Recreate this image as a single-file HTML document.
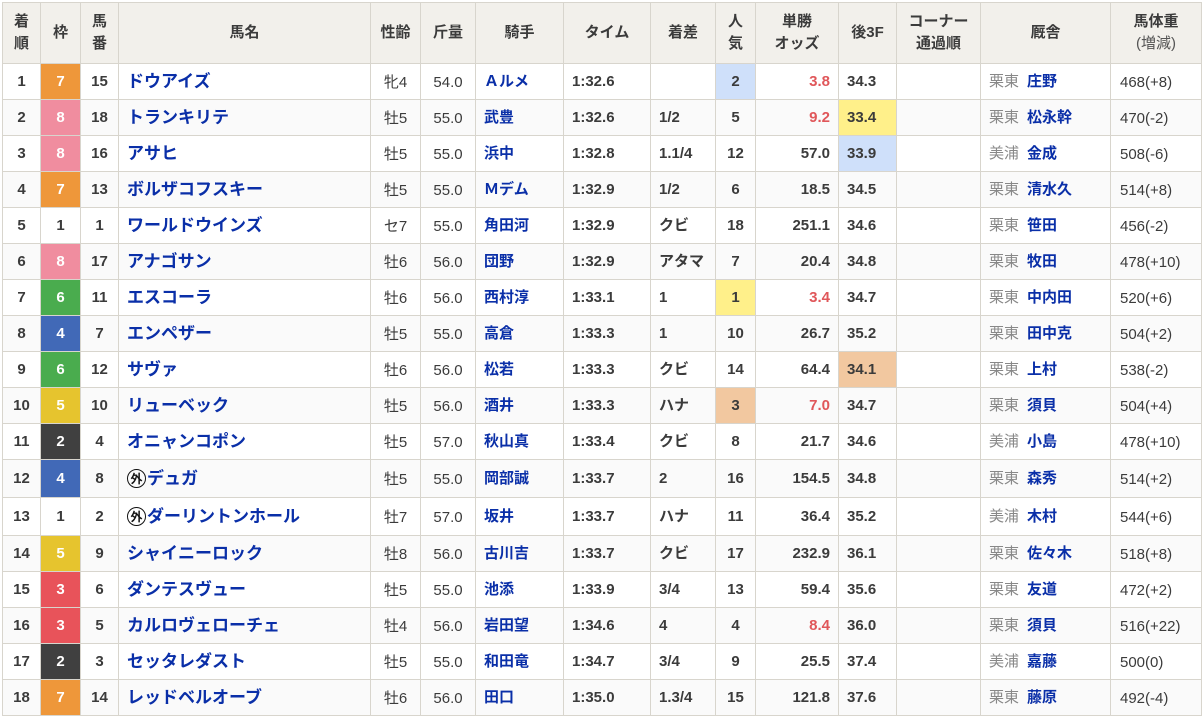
<!DOCTYPE html>
<html><head><meta charset="utf-8"><style>
body{margin:0;background:#fff;font-family:"Liberation Sans","Noto Sans CJK JP",sans-serif;color:#3b3b3b}
table{position:absolute;left:2px;top:2px;border-collapse:collapse;table-layout:fixed;width:1199px}
td,th{border:1px solid #d8d5cd;padding:0;font-size:15px;white-space:nowrap;overflow:hidden;vertical-align:middle}
th{background:#f2f0eb;font-weight:bold;height:60px;line-height:22px;color:#3b3b3b}
th small{font-weight:normal;font-size:15px;color:#555}
td{height:35px;font-weight:bold;text-align:center;line-height:20px}
tr.t td{height:37px}
tbody tr:nth-child(even) td{background:#fafafa}
td.nm{text-align:left;padding-left:8px;color:#0a2fa8;font-size:17px}
.fx{display:flex;align-items:center;height:24px}
td.n{font-weight:normal;text-align:center;font-size:15px;padding-top:3px;height:32px}
td.j{text-align:left;padding-left:8px;color:#0a2fa8}
td.l{text-align:left;padding-left:8px}
td.o{text-align:right;padding-right:8px}
td.r{color:#e0575a}
td.tr{text-align:left;padding-left:8px;color:#0a2fa8}
td.tr span{color:#888;font-weight:normal;margin-right:8px}
td.w{text-align:left;padding-left:9px;font-weight:normal;padding-top:3px;height:32px}
tr.t td.n,tr.t td.w{height:34px}
tbody tr td.f1{background:#fff!important;color:#3b3b3b}
tbody tr td.f2{background:#404040!important;color:#fff}
tbody tr td.f3{background:#e8535a!important;color:#fff}
tbody tr td.f4{background:#4169b7!important;color:#fff}
tbody tr td.f5{background:#e6c42e!important;color:#fff}
tbody tr td.f6{background:#4aac4e!important;color:#fff}
tbody tr td.f7{background:#ee973a!important;color:#fff}
tbody tr td.f8{background:#f08d9f!important;color:#fff}
tbody tr td.y{background:#fff08a!important}
tbody tr td.b{background:#cfe0fa!important}
tbody tr td.or{background:#f2c8a0!important}
.g{display:flex;align-items:center;justify-content:center;width:19px;height:19px;border:1.5px solid #111;border-radius:50%;font-size:12px;color:#111;margin-right:1px;box-sizing:border-box;line-height:12px;flex:none}
</style></head><body>
<table>
<colgroup><col style="width:38px"><col style="width:40px"><col style="width:38px"><col style="width:252px"><col style="width:50px"><col style="width:55px"><col style="width:88px"><col style="width:87px"><col style="width:65px"><col style="width:40px"><col style="width:83px"><col style="width:58px"><col style="width:84px"><col style="width:130px"><col style="width:91px"></colgroup>
<thead><tr><th>着<br>順</th><th>枠</th><th>馬<br>番</th><th>馬名</th><th>性齢</th><th>斤量</th><th>騎手</th><th>タイム</th><th>着差</th><th>人<br>気</th><th>単勝<br>オッズ</th><th>後3F</th><th>コーナー<br>通過順</th><th>厩舎</th><th>馬体重<br><small>(増減)</small></th></tr></thead>
<tbody>
<tr><td>1</td><td class="f7">7</td><td>15</td><td class="nm">ドウアイズ</td><td class="n">牝4</td><td class="n">54.0</td><td class="j">Ａルメ</td><td class="l">1:32.6</td><td class="l"></td><td class="b">2</td><td class="o r">3.8</td><td class="l">34.3</td><td></td><td class="tr"><span>栗東</span>庄野</td><td class="w">468(+8)</td></tr>
<tr><td>2</td><td class="f8">8</td><td>18</td><td class="nm">トランキリテ</td><td class="n">牡5</td><td class="n">55.0</td><td class="j">武豊</td><td class="l">1:32.6</td><td class="l">1/2</td><td>5</td><td class="o r">9.2</td><td class="l y">33.4</td><td></td><td class="tr"><span>栗東</span>松永幹</td><td class="w">470(-2)</td></tr>
<tr><td>3</td><td class="f8">8</td><td>16</td><td class="nm">アサヒ</td><td class="n">牡5</td><td class="n">55.0</td><td class="j">浜中</td><td class="l">1:32.8</td><td class="l">1.1/4</td><td>12</td><td class="o">57.0</td><td class="l b">33.9</td><td></td><td class="tr"><span>美浦</span>金成</td><td class="w">508(-6)</td></tr>
<tr><td>4</td><td class="f7">7</td><td>13</td><td class="nm">ボルザコフスキー</td><td class="n">牡5</td><td class="n">55.0</td><td class="j">Ｍデム</td><td class="l">1:32.9</td><td class="l">1/2</td><td>6</td><td class="o">18.5</td><td class="l">34.5</td><td></td><td class="tr"><span>栗東</span>清水久</td><td class="w">514(+8)</td></tr>
<tr><td>5</td><td class="f1">1</td><td>1</td><td class="nm">ワールドウインズ</td><td class="n">セ7</td><td class="n">55.0</td><td class="j">角田河</td><td class="l">1:32.9</td><td class="l">クビ</td><td>18</td><td class="o">251.1</td><td class="l">34.6</td><td></td><td class="tr"><span>栗東</span>笹田</td><td class="w">456(-2)</td></tr>
<tr><td>6</td><td class="f8">8</td><td>17</td><td class="nm">アナゴサン</td><td class="n">牡6</td><td class="n">56.0</td><td class="j">団野</td><td class="l">1:32.9</td><td class="l">アタマ</td><td>7</td><td class="o">20.4</td><td class="l">34.8</td><td></td><td class="tr"><span>栗東</span>牧田</td><td class="w">478(+10)</td></tr>
<tr><td>7</td><td class="f6">6</td><td>11</td><td class="nm">エスコーラ</td><td class="n">牡6</td><td class="n">56.0</td><td class="j">西村淳</td><td class="l">1:33.1</td><td class="l">1</td><td class="y">1</td><td class="o r">3.4</td><td class="l">34.7</td><td></td><td class="tr"><span>栗東</span>中内田</td><td class="w">520(+6)</td></tr>
<tr><td>8</td><td class="f4">4</td><td>7</td><td class="nm">エンペザー</td><td class="n">牡5</td><td class="n">55.0</td><td class="j">高倉</td><td class="l">1:33.3</td><td class="l">1</td><td>10</td><td class="o">26.7</td><td class="l">35.2</td><td></td><td class="tr"><span>栗東</span>田中克</td><td class="w">504(+2)</td></tr>
<tr><td>9</td><td class="f6">6</td><td>12</td><td class="nm">サヴァ</td><td class="n">牡6</td><td class="n">56.0</td><td class="j">松若</td><td class="l">1:33.3</td><td class="l">クビ</td><td>14</td><td class="o">64.4</td><td class="l or">34.1</td><td></td><td class="tr"><span>栗東</span>上村</td><td class="w">538(-2)</td></tr>
<tr><td>10</td><td class="f5">5</td><td>10</td><td class="nm">リューベック</td><td class="n">牡5</td><td class="n">56.0</td><td class="j">酒井</td><td class="l">1:33.3</td><td class="l">ハナ</td><td class="or">3</td><td class="o r">7.0</td><td class="l">34.7</td><td></td><td class="tr"><span>栗東</span>須貝</td><td class="w">504(+4)</td></tr>
<tr><td>11</td><td class="f2">2</td><td>4</td><td class="nm">オニャンコポン</td><td class="n">牡5</td><td class="n">57.0</td><td class="j">秋山真</td><td class="l">1:33.4</td><td class="l">クビ</td><td>8</td><td class="o">21.7</td><td class="l">34.6</td><td></td><td class="tr"><span>美浦</span>小島</td><td class="w">478(+10)</td></tr>
<tr class="t"><td>12</td><td class="f4">4</td><td>8</td><td class="nm"><div class="fx"><span class="g">外</span>デュガ</div></td><td class="n">牡5</td><td class="n">55.0</td><td class="j">岡部誠</td><td class="l">1:33.7</td><td class="l">2</td><td>16</td><td class="o">154.5</td><td class="l">34.8</td><td></td><td class="tr"><span>栗東</span>森秀</td><td class="w">514(+2)</td></tr>
<tr class="t"><td>13</td><td class="f1">1</td><td>2</td><td class="nm"><div class="fx"><span class="g">外</span>ダーリントンホール</div></td><td class="n">牡7</td><td class="n">57.0</td><td class="j">坂井</td><td class="l">1:33.7</td><td class="l">ハナ</td><td>11</td><td class="o">36.4</td><td class="l">35.2</td><td></td><td class="tr"><span>美浦</span>木村</td><td class="w">544(+6)</td></tr>
<tr><td>14</td><td class="f5">5</td><td>9</td><td class="nm">シャイニーロック</td><td class="n">牡8</td><td class="n">56.0</td><td class="j">古川吉</td><td class="l">1:33.7</td><td class="l">クビ</td><td>17</td><td class="o">232.9</td><td class="l">36.1</td><td></td><td class="tr"><span>栗東</span>佐々木</td><td class="w">518(+8)</td></tr>
<tr><td>15</td><td class="f3">3</td><td>6</td><td class="nm">ダンテスヴュー</td><td class="n">牡5</td><td class="n">55.0</td><td class="j">池添</td><td class="l">1:33.9</td><td class="l">3/4</td><td>13</td><td class="o">59.4</td><td class="l">35.6</td><td></td><td class="tr"><span>栗東</span>友道</td><td class="w">472(+2)</td></tr>
<tr><td>16</td><td class="f3">3</td><td>5</td><td class="nm">カルロヴェローチェ</td><td class="n">牡4</td><td class="n">56.0</td><td class="j">岩田望</td><td class="l">1:34.6</td><td class="l">4</td><td>4</td><td class="o r">8.4</td><td class="l">36.0</td><td></td><td class="tr"><span>栗東</span>須貝</td><td class="w">516(+22)</td></tr>
<tr><td>17</td><td class="f2">2</td><td>3</td><td class="nm">セッタレダスト</td><td class="n">牡5</td><td class="n">55.0</td><td class="j">和田竜</td><td class="l">1:34.7</td><td class="l">3/4</td><td>9</td><td class="o">25.5</td><td class="l">37.4</td><td></td><td class="tr"><span>美浦</span>嘉藤</td><td class="w">500(0)</td></tr>
<tr><td>18</td><td class="f7">7</td><td>14</td><td class="nm">レッドベルオーブ</td><td class="n">牡6</td><td class="n">56.0</td><td class="j">田口</td><td class="l">1:35.0</td><td class="l">1.3/4</td><td>15</td><td class="o">121.8</td><td class="l">37.6</td><td></td><td class="tr"><span>栗東</span>藤原</td><td class="w">492(-4)</td></tr>
</tbody></table>
</body></html>
